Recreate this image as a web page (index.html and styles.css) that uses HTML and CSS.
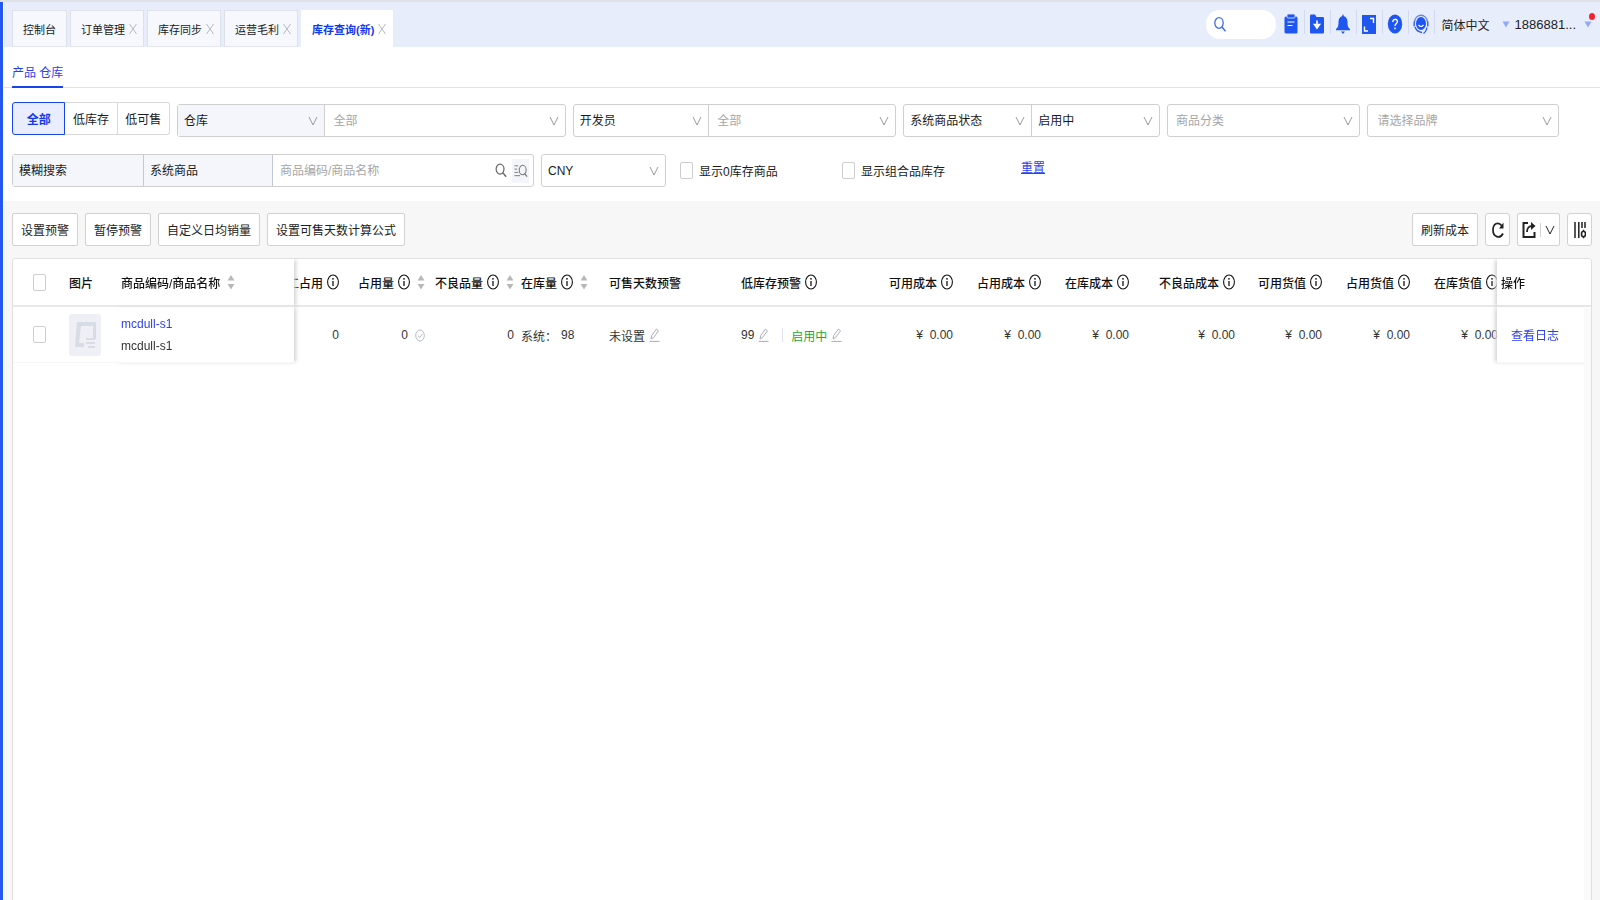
FILE: index.html
```html
<!DOCTYPE html>
<html lang="zh-CN">
<head>
<meta charset="utf-8">
<title>库存查询</title>
<link rel="stylesheet" href="styles.css">
</head>
<body>
<svg class="defs" aria-hidden="true">
  <symbol id="chev" viewBox="0 0 10 10"><path d="M1 1l4 8 4-8" fill="none" stroke="currentColor" stroke-width="1"/></symbol>
  <symbol id="close" viewBox="0 0 8 12"><path d="M.5 1l7 10M7.500 1l-7 10" fill="none" stroke="currentColor" stroke-width="1"/></symbol>
  <symbol id="info" viewBox="0 0 12 16"><ellipse cx="6" cy="8" rx="5.400" ry="7" fill="none" stroke="currentColor" stroke-width="1.100"/><path d="M6 7v5" stroke="currentColor" stroke-width="1.300"/><circle cx="6" cy="4.800" r=".9" fill="currentColor"/></symbol>
  <symbol id="sort" viewBox="0 0 8 16"><path d="M4 1l3.500 5.500h-7zM4 15.500L.5 10h7z" fill="currentColor"/></symbol>
  <symbol id="pen" viewBox="0 0 11 14"><path d="M2 11l.7-3.500L7.500 1l2 1.800-4.800 6.600zM.5 13.400h10" fill="none" stroke="currentColor" stroke-width="1"/></symbol>
  <symbol id="tri" viewBox="0 0 8 8"><path d="M0 .5h8L4 7.500z" fill="currentColor"/></symbol>
  <symbol id="mag" viewBox="0 0 12 16"><ellipse cx="5" cy="6.500" rx="4.200" ry="5.300" fill="none" stroke="currentColor" stroke-width="1.300"/><path d="M8 10.500l3.500 4.200" stroke="currentColor" stroke-width="1.500"/></symbol>
</svg>
<div class="app">
  <header class="top">
    <nav class="tabs">
      <a class="tab" href="#">控制台</a>
      <a class="tab" href="#">订单管理<svg class="x"><use href="#close"/></svg></a>
      <a class="tab" href="#">库存同步<svg class="x"><use href="#close"/></svg></a>
      <a class="tab" href="#">运营毛利<svg class="x"><use href="#close"/></svg></a>
      <a class="tab on" href="#">库存查询(新)<svg class="x"><use href="#close"/></svg></a>
    </nav>
    <div class="tools">
      <label class="pill"><svg><use href="#mag"/></svg><input type="text" aria-label="搜索"></label>
      <button class="tool" aria-label="任务"><svg viewBox="0 0 16 20"><rect x="1.500" y="2.500" width="13" height="17" rx="1.500" fill="#1f55f0"/><rect x="4" y="0" width="8" height="4" rx="1" fill="#1f55f0" stroke="#e8edfc" stroke-width=".8"/><path d="M4.500 8h7M4.500 11.500h5" stroke="#fff" stroke-width="1.200"/></svg></button>
      <button class="tool" aria-label="下载"><svg viewBox="0 0 16 20"><path d="M1 2q0-1.500 1-1.500h4l1.500 2.500H14q1 0 1 1.500V18q0 1.500-1 1.500H2q-1 0-1-1.500z" fill="#1f55f0"/><path d="M8 6.500v6M5.500 10.500L8 14 10.500 10.500z" stroke="#fff" stroke-width="1.600" fill="#fff"/></svg></button>
      <button class="tool" aria-label="通知"><svg viewBox="0 0 16 20"><path d="M8 0l1 2.200c2.500.8 3.500 3 3.500 5.800 0 4 .5 5.500 2.500 7v1.200H1V15c2-1.500 2.500-3 2.500-7 0-2.800 1-5 3.500-5.800zM6 17.500h4L8 20z" fill="#1f55f0"/></svg></button>
      <button class="tool" aria-label="全屏"><svg viewBox="0 0 16 20"><rect x="1" y="1" width="14" height="19" fill="#1f55f0"/><path d="M9 4.500h3.500V9M3.500 12.500V17H7" stroke="#fff" stroke-width="1.400" fill="none"/></svg></button>
      <button class="tool" aria-label="帮助"><svg viewBox="0 0 16 20"><ellipse cx="8" cy="10" rx="7.200" ry="9.500" fill="#1f55f0"/><path d="M5.800 8c0-3.500 4.600-3.500 4.600-.4C10.400 9.600 8 9.400 8 12M8 13.500v1.800" stroke="#fff" stroke-width="1.400" fill="none"/></svg></button>
      <button class="tool" aria-label="客服"><svg viewBox="0 0 16 20"><path d="M1.500 8C2.500-1 13.500-1 14.500 8" stroke="#5f86f5" stroke-width="1.400" fill="none"/><ellipse cx="8" cy="9.500" rx="5" ry="6.500" fill="#1f55f0"/><path d="M5.500 11q2.500 3 5 0" stroke="#fff" stroke-width="1.200" fill="none"/><path d="M1.200 7.500v5M14.800 7.500v5M2 13q2 5 7 5.500M14 13.500q-.5 4-3.500 6" stroke="#1f55f0" stroke-width="1.300" fill="none"/></svg></button>
      <button class="menu lang">简体中文<svg><use href="#tri"/></svg></button>
      <button class="menu user">1886881...<svg><use href="#tri"/></svg><i class="dot"></i></button>
    </div>
  </header>
  <nav class="sub"><a href="#">产品 仓库</a></nav>
  <section class="filters">
    <div class="row first">
      <div class="seg"><button class="on">全部</button><button>低库存</button><button>低可售</button></div>
      <div class="pair p1">
        <label class="sel gray w148"><select aria-label="范围"><option>仓库</option></select><svg><use href="#chev"/></svg></label>
        <label class="sel dim w242"><select aria-label="仓库"><option>全部</option></select><svg><use href="#chev"/></svg></label>
      </div>
      <div class="pair p2">
        <label class="sel w136"><select aria-label="人员类型"><option>开发员</option></select><svg><use href="#chev"/></svg></label>
        <label class="sel dim w188"><select aria-label="开发员"><option>全部</option></select><svg><use href="#chev"/></svg></label>
      </div>
      <div class="pair p3">
        <label class="sel w128"><select aria-label="状态类型"><option>系统商品状态</option></select><svg><use href="#chev"/></svg></label>
        <label class="sel w128"><select aria-label="系统商品状态"><option>启用中</option></select><svg><use href="#chev"/></svg></label>
      </div>
      <div class="pair p4"><label class="sel dim w128"><select aria-label="商品分类"><option>商品分类</option></select><svg><use href="#chev"/></svg></label></div>
      <div class="pair p4"><label class="sel dim brand w128"><select aria-label="品牌"><option>请选择品牌</option></select><svg><use href="#chev"/></svg></label></div>
    </div>
    <div class="row second">
      <div class="pair search">
        <label class="sel gray s1"><select aria-label="搜索方式"><option>模糊搜索</option></select></label>
        <label class="sel gray s2"><select aria-label="搜索字段"><option>系统商品</option></select></label>
        <div class="box"><input type="text" aria-label="关键词" placeholder="商品编码/商品名称">
          <button class="go" aria-label="搜索"><svg><use href="#mag"/></svg></button>
          <button class="multi" aria-label="批量搜索"><svg viewBox="0 0 14 16"><path d="M0 3h4M0 6.500h3M0 10h4M0 13.500h6" stroke="currentColor"/><ellipse cx="8.800" cy="7.500" rx="3.700" ry="5" fill="none" stroke="currentColor" stroke-width="1.100"/><path d="M11 11.500l2.500 3" stroke="currentColor" stroke-width="1.300"/></svg></button>
        </div>
      </div>
      <div class="pair cur"><label class="sel w128"><select aria-label="币种"><option>CNY</option></select><svg><use href="#chev"/></svg></label></div>
      <label class="check c1"><input type="checkbox">显示0库存商品</label>
      <label class="check c2"><input type="checkbox">显示组合品库存</label>
      <a class="reset" href="#">重置</a>
    </div>
  </section>
  <main class="main">
    <div class="bar">
      <button class="btn">设置预警</button><button class="btn">暂停预警</button><button class="btn">自定义日均销量</button><button class="btn">设置可售天数计算公式</button>
      <span class="space"></span>
      <button class="btn">刷新成本</button>
      <button class="btn ico" aria-label="刷新"><svg viewBox="0 0 12 18"><path d="M9.800 4.800C6-.2 1 3 1 9c0 7 7 9.500 10 3.500" fill="none" stroke="#222" stroke-width="1.700"/><path d="M11.500 1.500v6H7z" fill="#222"/></svg></button>
      <button class="btn exp" aria-label="导出"><svg class="e1" viewBox="0 0 14 18"><path d="M6 2H1.500v14h11v-5" fill="none" stroke="#222" stroke-width="2"/><path d="M5 11c0-4 2-6 5-6" fill="none" stroke="#222" stroke-width="1.800"/><path d="M9 1l4.500 4L9 9z" fill="#222"/></svg><i></i><svg class="e2"><use href="#chev"/></svg></button>
      <button class="btn ico" aria-label="列设置"><svg viewBox="0 0 12 18"><path d="M1 1v16M4.800 1v16M8 1v6M11 1v6" stroke="#222" stroke-width="1.500"/><ellipse cx="9.500" cy="13" rx="2" ry="2.700" fill="none" stroke="#222" stroke-width="1.600"/><path d="M9.500 8.800v2M9.500 15.200v2" stroke="#222" stroke-width="1.300"/></svg></button>
    </div>
    <div class="panel">
      <table class="grid">
        <colgroup><col class="k49"><col class="k52"><col class="k180"><col class="k52"><col class="k86"><col class="k82"><col class="k88"><col class="k132"><col><col class="k88"><col class="k88"><col class="k88"><col class="k106"><col class="k87"><col class="k88"><col class="k88"><col class="k94"></colgroup>
        <thead><tr>
          <th class="f f1"><input type="checkbox" aria-label="全选"></th>
          <th class="f f2">图片</th>
          <th class="f f3"><div class="c">商品编码/商品名称<svg class="so"><use href="#sort"/></svg></div></th>
          <th><div class="c r">加工占用<svg class="in"><use href="#info"/></svg></div></th>
          <th><div class="c r">占用量<svg class="in"><use href="#info"/></svg><svg class="so"><use href="#sort"/></svg></div></th>
          <th class="flush"><div class="c r">不良品量<svg class="in"><use href="#info"/></svg><svg class="so"><use href="#sort"/></svg></div></th>
          <th><div class="c">在库量<svg class="in"><use href="#info"/></svg><svg class="so"><use href="#sort"/></svg></div></th>
          <th>可售天数预警</th>
          <th><div class="c">低库存预警<svg class="in"><use href="#info"/></svg></div></th>
          <th><div class="c r">可用成本<svg class="in"><use href="#info"/></svg></div></th>
          <th><div class="c r">占用成本<svg class="in"><use href="#info"/></svg></div></th>
          <th><div class="c r">在库成本<svg class="in"><use href="#info"/></svg></div></th>
          <th><div class="c r">不良品成本<svg class="in"><use href="#info"/></svg></div></th>
          <th><div class="c r">可用货值<svg class="in"><use href="#info"/></svg></div></th>
          <th><div class="c r">占用货值<svg class="in"><use href="#info"/></svg></div></th>
          <th><div class="c r">在库货值<svg class="in"><use href="#info"/></svg></div></th>
          <th class="f end">操作</th>
        </tr></thead>
        <tbody><tr>
          <td class="f f1"><input type="checkbox" aria-label="选择 mcdull-s1"></td>
          <td class="f f2"><svg class="thumb" viewBox="0 0 32 42"><rect width="32" height="42" rx="3" fill="#eef0f5"/><path d="M8 8h19v17h-3V12H12l-2 17h5v4H6z" fill="#d8dce5"/><path d="M17 25h9M17 29h9M19 33h7" stroke="#d8dce5" stroke-width="2"/></svg></td>
          <td class="f f3"><div class="name"><a href="#">mcdull-s1</a><span>mcdull-s1</span></div></td>
          <td><div class="c r">0</div></td>
          <td><div class="c r">0<svg class="ok" viewBox="0 0 10 14"><ellipse cx="5" cy="7.500" rx="4.300" ry="5.500" fill="none" stroke="currentColor"/><path d="M3 7.500l1.700 2L7.500 6" fill="none" stroke="currentColor"/></svg></div></td>
          <td class="flush"><div class="c r">0</div></td>
          <td><div class="c">系统：<span>98</span></div></td>
          <td><div class="c">未设置<svg class="pe"><use href="#pen"/></svg></div></td>
          <td><div class="c">99<svg class="pe"><use href="#pen"/></svg><i class="vl"></i><span class="green">启用中</span><svg class="pe"><use href="#pen"/></svg></div></td>
          <td><div class="c r">¥&nbsp; 0.00</div></td><td><div class="c r">¥&nbsp; 0.00</div></td><td><div class="c r">¥&nbsp; 0.00</div></td><td><div class="c r">¥&nbsp; 0.00</div></td><td><div class="c r">¥&nbsp; 0.00</div></td><td><div class="c r">¥&nbsp; 0.00</div></td><td><div class="c r">¥&nbsp; 0.00</div></td>
          <td class="f end"><a href="#">查看日志</a></td>
        </tr></tbody>
      </table>
    </div>
  </main>
</div>
</body>
</html>
```
FILE: styles.css
```css
* { box-sizing: border-box; }
body, button, input, select {
  font-family: "Liberation Sans", "Noto Sans CJK SC", sans-serif;
  font-size: 12px;
  color: #1a1a1a;
}
body { margin: 0; background: #fff; }
button { padding: 0; border: 0; background: none; cursor: pointer; white-space: nowrap; }
a { color: #2b3ff0; text-decoration: none; }
.defs { position: absolute; width: 0; height: 0; }
.app {
  display: flex;
  flex-direction: column;
  min-height: 100vh;
  border-top: 2px solid #dfe1e4;
  position: relative;
  padding-left: 4px;
}
.app::before { content: ""; position: absolute; left: 0; top: 0; bottom: 0; width: 3px; background: #2456f0; }

.top { display: flex; justify-content: space-between; height: 45px; background: #e8edfc; }
.tabs { display: flex; align-items: flex-end; gap: 3px; padding-left: 8px; }
.tab {
  display: flex; align-items: center; gap: 4px;
  height: 37px; padding: 0 6px 0 10px;
  background: #f6f8fe; border: 1px solid #dde1ea; border-bottom-color: #e3e6ee;
  color: #1a1a1a; font-size: 11px; white-space: nowrap;
}
.tab:first-child { padding-right: 10px; }
.tab.on { background: #fff; border-color: #fff; color: #1238f0; font-weight: 700; }
.x { width: 8px; height: 12px; color: #b4b8c0; }

.tools { display: flex; align-items: flex-start; padding: 8px 8px 0 0; }
.pill { display: flex; align-items: center; width: 70px; height: 29px; margin-right: 3px; padding: 0 8px; border-radius: 14px; background: #fff; color: #3d6bf3; }
.pill svg { flex: none; width: 12px; height: 17px; }
.pill input { width: 100%; min-width: 0; border: 0; outline: 0; background: none; }
.tool { display: flex; justify-content: center; width: 26px; height: 24px; padding-top: 4px; border-right: 1px solid #d3daf0; }
.tool svg { width: 16px; height: 20px; flex: none; }
.menu { display: flex; align-items: center; height: 29px; color: #222; position: relative; }
.menu svg { width: 8px; height: 7px; color: #8fa9f6; }
.lang { padding-left: 7px; gap: 12px; }
.user { padding-left: 5px; gap: 8px; font-size: 13px; }
.dot { position: absolute; right: -3px; top: 3px; width: 6px; height: 7px; border-radius: 50%; background: #f5222d; }

.sub { display: flex; height: 41px; padding-left: 8px; border-bottom: 1px solid #e2e3e6; }
.sub a { display: flex; align-items: center; height: 41px; padding-top: 10px; border-bottom: 2px solid #1544f0; }

.filters { display: flex; flex-direction: column; gap: 17px; padding: 14px 41px 14px 8px; }
.row { display: flex; align-items: flex-end; gap: 7px; }
.first { height: 35px; }
.seg { display: flex; align-self: flex-start; width: 158px; height: 33px; }
.seg button { flex: 1; border: 1px solid #d9d9d9; border-left: 0; background: #fff; }
.seg button:last-child { border-radius: 0 3px 3px 0; }
.seg .on { border: 1px solid #1544f0; border-radius: 3px 0 0 3px; background: #e9edfd; color: #1238f0; font-weight: 700; }
.pair { display: flex; height: 33px; border: 1px solid #cfcfcf; border-radius: 3px; background: #fff; min-width: 0; }
.p1 { flex: 390 1 0; } .p2 { flex: 324 1 0; } .p3 { flex: 257 1 0; } .p4 { flex: 192 1 0; }
.sel { display: grid; min-width: 0; align-items: center; }
.sel + .sel { border-left: 1px solid #cfcfcf; }
.sel select, .sel svg { grid-area: 1 / 1; }
.sel select { appearance: none; width: 100%; height: 31px; padding: 0 26px 0 6px; border: 0; background: none; }
.sel svg { justify-self: end; width: 10px; height: 10px; margin-right: 6px; color: #9a9a9a; pointer-events: none; }
.dim select { color: #a6a6a6; padding-left: 8px; }
.brand select { padding-left: 10px; }
.gray { background: #f5f6fb; }
.w148 { flex: 148 1 0; } .w242 { flex: 242 1 0; } .w136 { flex: 136 1 0; } .w188 { flex: 188 1 0; } .w128 { flex: 1 1 0; }
.search { width: 522px; }
.s1 { width: 130px; } .s2 { width: 130px; }
.search .s2 { border-left-color: #c3c8d8; border-right: 1px solid #c3c8d8; }
.box { flex: 1; display: flex; align-items: center; padding-right: 4px; min-width: 0; }
.box input { flex: 1; min-width: 0; height: 31px; padding: 0 7px; border: 0; outline: 0; background: none; }
.box input::placeholder { color: #a6a6a6; }
.go svg { display: block; width: 12px; height: 15px; color: #666; }
.multi { display: grid; place-items: center; width: 17px; height: 24px; margin-left: 5px; background: #f4f5fa; color: #777; }
.multi svg { width: 14px; height: 15px; }
.cur { width: 125px; }
.second { align-items: center; }
.check { display: flex; align-items: center; gap: 6px; white-space: nowrap; }
input[type="checkbox"] { appearance: none; width: 13px; height: 17px; margin: 0; border: 1px solid #cdcdcd; border-radius: 2px; background: #fff; }
.c1 { width: 155px; margin-left: 7px; } .c2 { width: 172px; }
.reset { align-self: flex-start; line-height: 28px; text-decoration: underline; }

.main { flex: 1; display: flex; flex-direction: column; padding: 12px 8px 0; background: #f7f7f7; }
.bar { display: flex; gap: 7px; margin-bottom: 12px; }
.btn { height: 33px; padding: 0 8px; border: 1px solid #d2d2d2; border-radius: 2px; background: #fff; color: #222; }
.space { flex: 1; }
.ico { display: grid; place-items: center; width: 25px; padding: 0; border-radius: 3px; }
.ico svg { width: 12px; height: 18px; }
.exp { display: flex; align-items: center; justify-content: center; gap: 4px; width: 43px; padding: 0; }
.e1 { width: 14px; height: 18px; }
.exp i { width: 1px; height: 14px; background: #d2d2d2; }
.e2 { width: 10px; height: 10px; color: #222; }

.panel { flex: 1; position: relative; overflow: hidden; background: #fff; border: 1px solid #e0e0e0; border-bottom: 0; border-radius: 4px 4px 0 0; }
.panel::after { content: ""; position: absolute; right: 0; top: 49px; bottom: 0; width: 7px; background: #fafafa; z-index: 3; }
.grid { width: calc(100% + 8px); table-layout: fixed; border-collapse: separate; border-spacing: 0; }
.k49 { width: 49px; } .k52 { width: 52px; } .k82 { width: 82px; } .k86 { width: 86px; } .k87 { width: 87px; } .k88 { width: 88px; }
.k94 { width: 94px; } .k106 { width: 106px; } .k132 { width: 132px; } .k180 { width: 180px; }
th, td { padding: 0 7px; text-align: left; white-space: nowrap; }
th { height: 48px; border-bottom: 2px solid #e8e8e8; font-weight: 500; color: #111; }
td { height: 56px; color: #333; }
.flush { padding-right: 0; }
.f { position: sticky; z-index: 2; background: #fff; }
.f1 { left: 0; padding-left: 20px; }
.f1 input { display: block; }
.f2 { left: 49px; }
.f3 { left: 101px; box-shadow: 3px 0 4px -1px #d4d4d4; }
.end { right: 0; padding: 0 4px; box-shadow: -3px 0 4px -1px #d4d4d4; }
td.end { padding-left: 14px; }
td.f { border-bottom: 1px solid #f7f7f7; }
.c { display: flex; align-items: center; gap: 4px; }
.r { justify-content: flex-end; }
.c svg { flex: none; }
.in { width: 12px; height: 16px; }
.so { width: 8px; height: 16px; margin-left: 3px; color: #b8b8b8; }
.pe { width: 11px; height: 14px; color: #a9adb8; }
.ok { width: 10px; height: 14px; margin-left: 3px; color: #b5b9c2; }
.thumb { display: block; width: 32px; height: 42px; }
.name { display: flex; flex-direction: column; line-height: 22px; }
.vl { width: 1px; height: 14px; margin: 0 4px 0 9px; background: #dfe3ee; }
.green { color: #1aa83c; }
```
